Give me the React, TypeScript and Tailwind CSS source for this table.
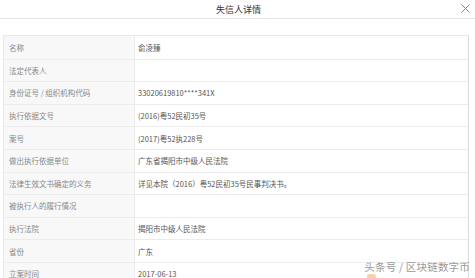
import React from "react";

const rows: [string, string][] = [
  ["名称", "俞凌臻"],
  ["法定代表人", ""],
  ["身份证号 / 组织机构代码", "33020619810****341X"],
  ["执行依据文号", "(2016)粤52民初35号"],
  ["案号", "(2017)粤52执228号"],
  ["做出执行依据单位", "广东省揭阳市中级人民法院"],
  ["法律生效文书确定的义务", "详见本院（2016）粤52民初35号民事判决书。"],
  ["被执行人的履行情况", ""],
  ["执行法院", "揭阳市中级人民法院"],
  ["省份", "广东"],
  ["立案时间", "2017-06-13"],
];

export default function App() {
  return (
    <div
      className="relative w-[475px] h-[278px] overflow-hidden bg-white"
      style={{ fontFamily: '"Noto Sans CJK SC", "Noto Sans", sans-serif' }}
    >
      <div className="relative h-[19px] border-b border-[#e6e6e6] flex items-center justify-center">
        <span className="text-[9px] leading-none text-[#333] pl-[2px]">失信人详情</span>
        <span className="absolute right-[4px] top-[3px] text-[#777]">
          <svg width="11" height="11" viewBox="0 0 11 11">
            <path d="M1.5 1.5 L9.5 9.5 M9.5 1.5 L1.5 9.5" stroke="#888" strokeWidth="1" fill="none" />
          </svg>
        </span>
      </div>
      <div className="pt-[16px] pl-[3px] w-[469px]">
        <div className="border border-[#e8e8e8] border-r-[#dcdcdc]">
          {rows.map(([k, v], i) => (
            <div
              key={i}
              className={`flex h-[22.6px] ${i > 0 ? "border-t border-[#ececec]" : ""}`}
            >
              <div className="w-[131px] shrink-0 bg-[#f8f8f8] border-r border-[#ececec] flex items-center pl-[5px] text-[7.5px] text-[#888]">
                {k}
              </div>
              <div className="flex-1 flex items-center pl-[3px] text-[7.5px] text-[#555]">
                {v}
              </div>
            </div>
          ))}
        </div>
      </div>
      <div className="absolute right-[5px] top-[262px] text-[10.5px] leading-none text-[#9a9a9a] tracking-[0.2px]">
        头条号 / 区块链数字币
      </div>
      <div className="absolute left-[367px] top-[274px] w-[9px] h-[5px] rounded-full bg-[#f5b26b] opacity-60" />
    </div>
  );
}
